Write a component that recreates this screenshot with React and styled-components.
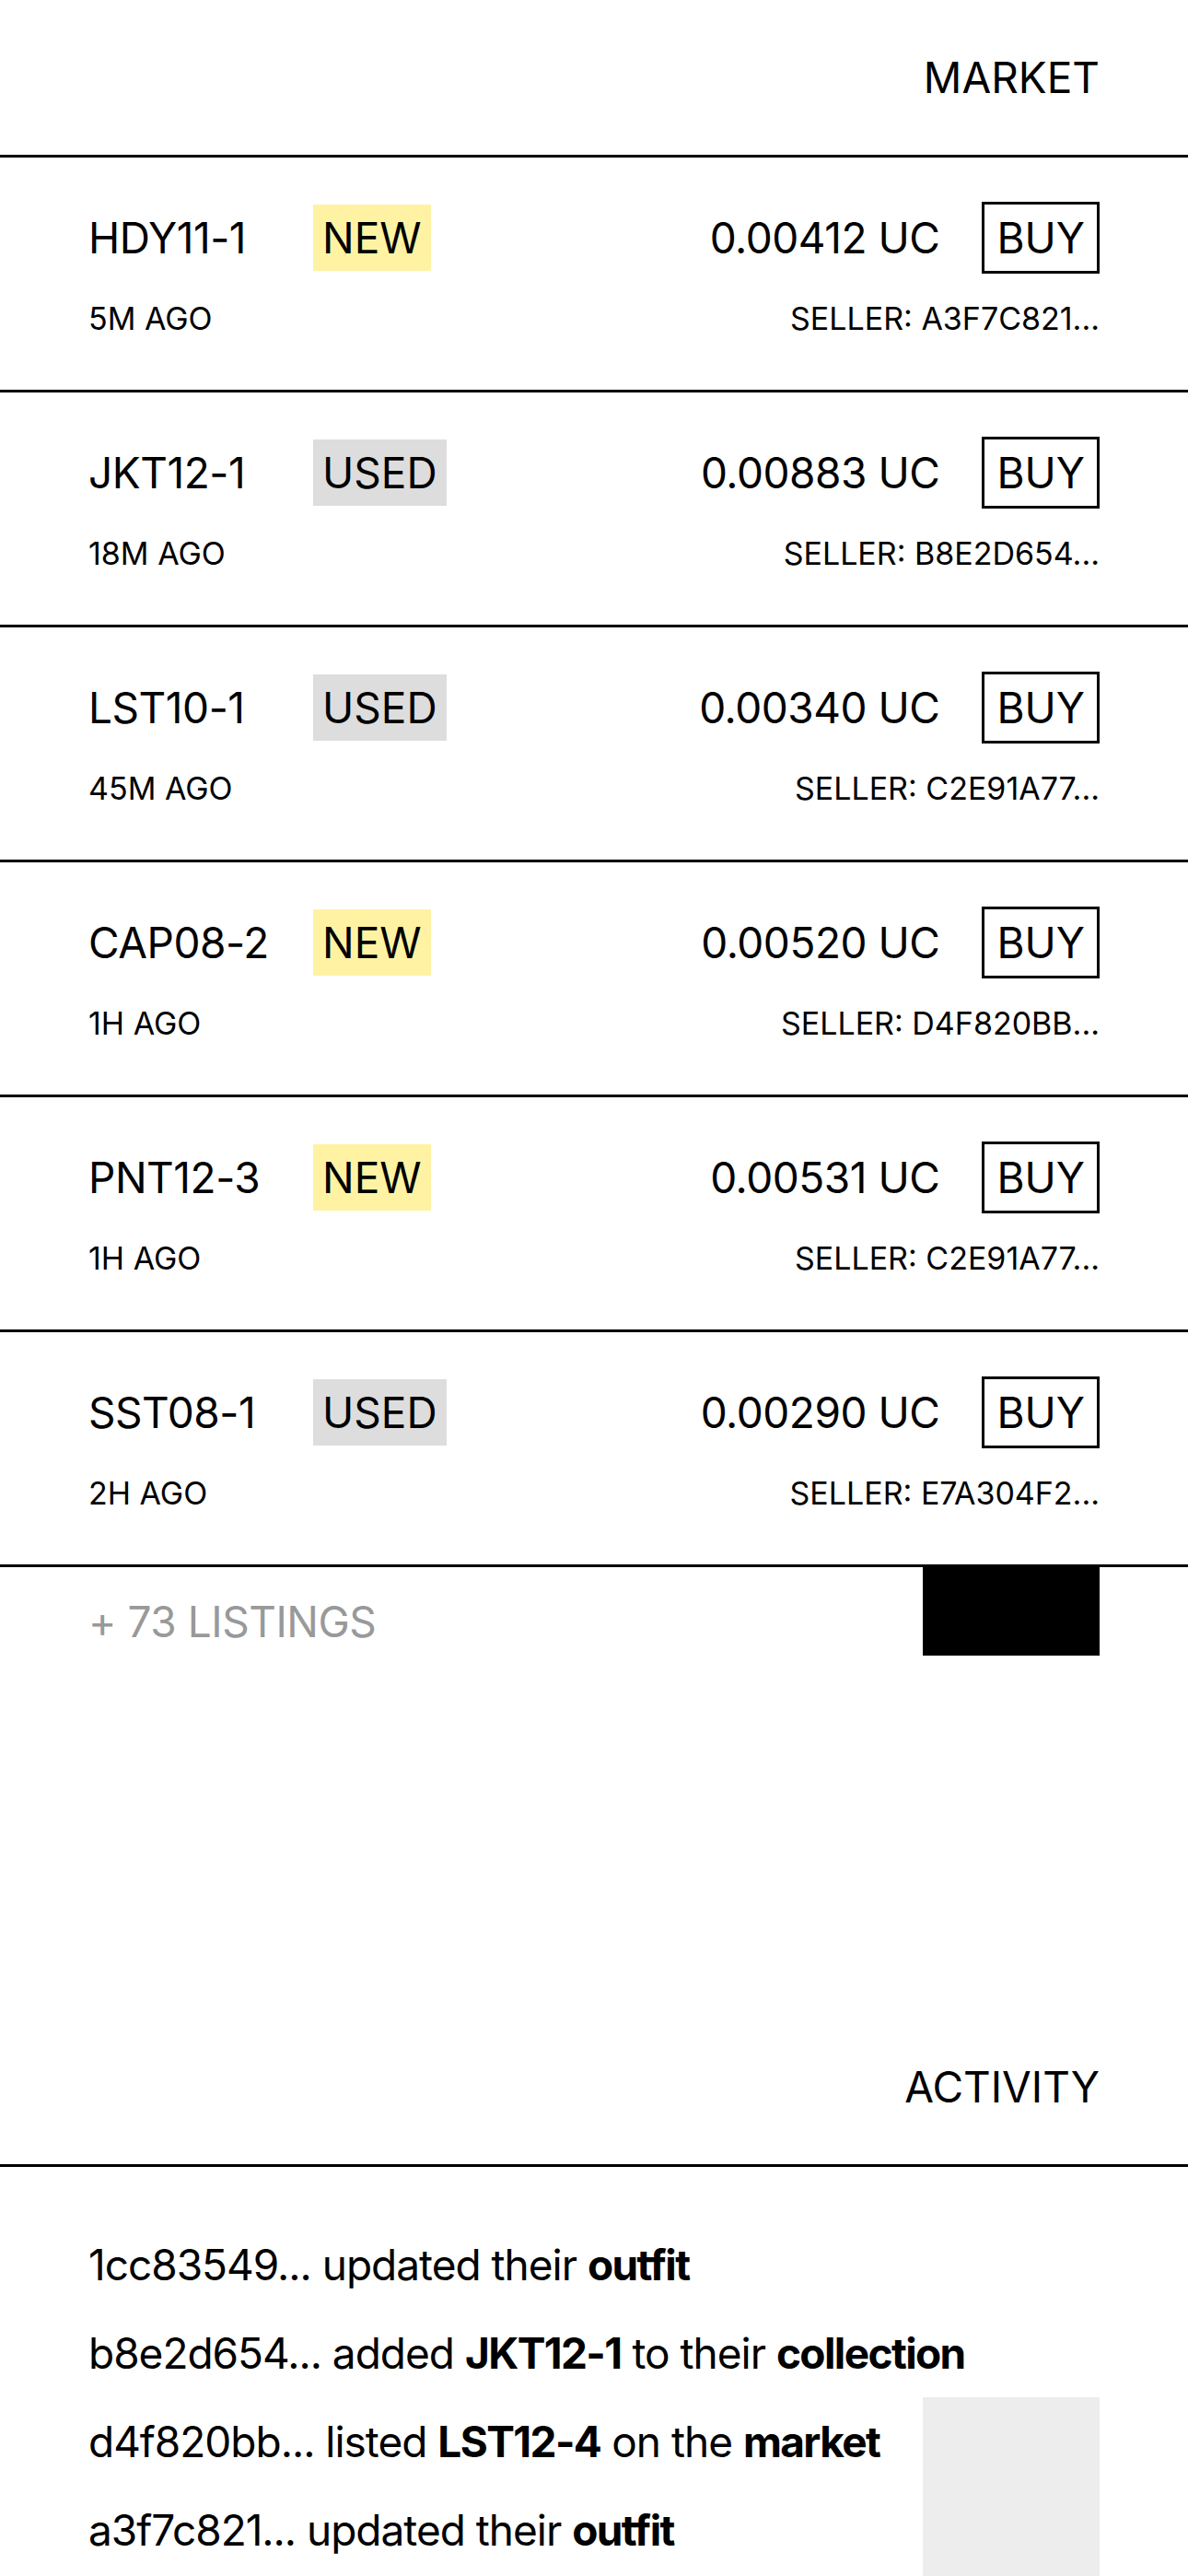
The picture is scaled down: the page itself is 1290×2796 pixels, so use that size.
import React from "react";
import styled, { createGlobalStyle } from "styled-components";

const listings = [
  { code: "HDY11-1", state: "NEW", price: "0.00412", ago: "5M AGO", seller: "A3F7C821..." },
  { code: "JKT12-1", state: "USED", price: "0.00883", ago: "18M AGO", seller: "B8E2D654..." },
  { code: "LST10-1", state: "USED", price: "0.00340", ago: "45M AGO", seller: "C2E91A77..." },
  { code: "CAP08-2", state: "NEW", price: "0.00520", ago: "1H AGO", seller: "D4F820BB..." },
  { code: "PNT12-3", state: "NEW", price: "0.00531", ago: "1H AGO", seller: "C2E91A77..." },
  { code: "SST08-1", state: "USED", price: "0.00290", ago: "2H AGO", seller: "E7A304F2..." },
];

const GlobalStyle = createGlobalStyle`
  html, body {
    margin: 0;
    padding: 0;
    background: #fff;
  }
  body {
    font-family: Inter, "Noto Sans", sans-serif;
    color: #000;
  }
`;

const App = () => {
  return (
    <Page>
      <GlobalStyle />
      <Section>
        <SectionHeader>MARKET</SectionHeader>
        {listings.map((item) => (
          <ListingRow key={item.code + item.ago}>
            <TopLine>
              <Code>{item.code}</Code>
              <Badge used={item.state === "USED"}>{item.state}</Badge>
              <Price>{item.price} UC</Price>
              <BuyButton>BUY</BuyButton>
            </TopLine>
            <MetaLine>
              <span>{item.ago}</span>
              <span>SELLER: {item.seller}</span>
            </MetaLine>
          </ListingRow>
        ))}
        <ListingsFooter>
          <MoreText>+ 73 LISTINGS</MoreText>
          <LoadBlock />
        </ListingsFooter>
      </Section>

      <ActivitySection>
        <SectionHeader>ACTIVITY</SectionHeader>
        <ActivityBody>
          <ActivityList>
            <ActivityItem>
              1cc83549... updated their <b>outfit</b>
            </ActivityItem>
            <ActivityItem>
              b8e2d654... added <b>JKT12-1</b> to their <b>collection</b>
            </ActivityItem>
            <ActivityItem>
              d4f820bb... listed <b>LST12-4</b> on the <b>market</b>
            </ActivityItem>
            <ActivityItem>
              a3f7c821... updated their <b>outfit</b>
            </ActivityItem>
          </ActivityList>
          <Thumb />
        </ActivityBody>
      </ActivitySection>
    </Page>
  );
};

export default App;

const Page = styled.div`
  width: 100%;
  overflow: hidden;
`;

const Section = styled.section`
  display: flex;
  flex-direction: column;
`;

const ActivitySection = styled(Section)`
  margin-top: 384px;
`;

const SectionHeader = styled.h2`
  margin: 0;
  padding: 56px 96px;
  font-size: 46px;
  font-weight: 400;
  line-height: 56px;
  text-align: right;
  border-bottom: 3px solid #000;
`;

const ListingRow = styled.div`
  display: flex;
  flex-direction: column;
  gap: 28px;
  padding: 48px 96px 57px;
  border-bottom: 3px solid #000;
`;

const TopLine = styled.div`
  display: flex;
  align-items: center;
  height: 78px;
`;

const Code = styled.div`
  width: 244px;
  font-size: 46px;
  line-height: 56px;
  letter-spacing: -0.01em;
`;

const Badge = styled.div`
  padding: 8px 10px;
  font-size: 46px;
  line-height: 56px;
  background: ${(props) => (props.used ? "#dddddd" : "#fff3a3")};
`;

const Price = styled.div`
  margin-left: auto;
  font-size: 46px;
  line-height: 56px;
  letter-spacing: -0.01em;
`;

const BuyButton = styled.button`
  margin-left: 46px;
  padding: 8px 13px;
  border: 3px solid #000;
  border-radius: 0;
  background: #fff;
  color: #000;
  font-family: inherit;
  font-size: 46px;
  line-height: 56px;
`;

const MetaLine = styled.div`
  display: flex;
  justify-content: space-between;
  font-size: 34px;
  line-height: 41px;
`;

const ListingsFooter = styled.div`
  display: flex;
  justify-content: space-between;
  align-items: flex-start;
  padding: 0 96px;
`;

const MoreText = styled.div`
  padding-top: 31px;
  font-size: 46px;
  line-height: 56px;
  letter-spacing: -0.01em;
  color: #999999;
`;

const LoadBlock = styled.div`
  width: 192px;
  height: 96px;
  background: #000;
`;

const ActivityBody = styled.div`
  display: grid;
  padding: 0 96px;
`;

const ActivityList = styled.div`
  grid-area: 1 / 1;
  display: flex;
  flex-direction: column;
  padding-top: 58px;
`;

const ActivityItem = styled.div`
  font-size: 46px;
  line-height: 96px;
  letter-spacing: -0.022em;
  white-space: nowrap;

  b {
    font-weight: 700;
    letter-spacing: -0.035em;
  }
`;

const Thumb = styled.div`
  grid-area: 1 / 1;
  justify-self: end;
  align-self: start;
  margin-top: 250px;
  width: 192px;
  height: 240px;
  background: #ededed;
`;
